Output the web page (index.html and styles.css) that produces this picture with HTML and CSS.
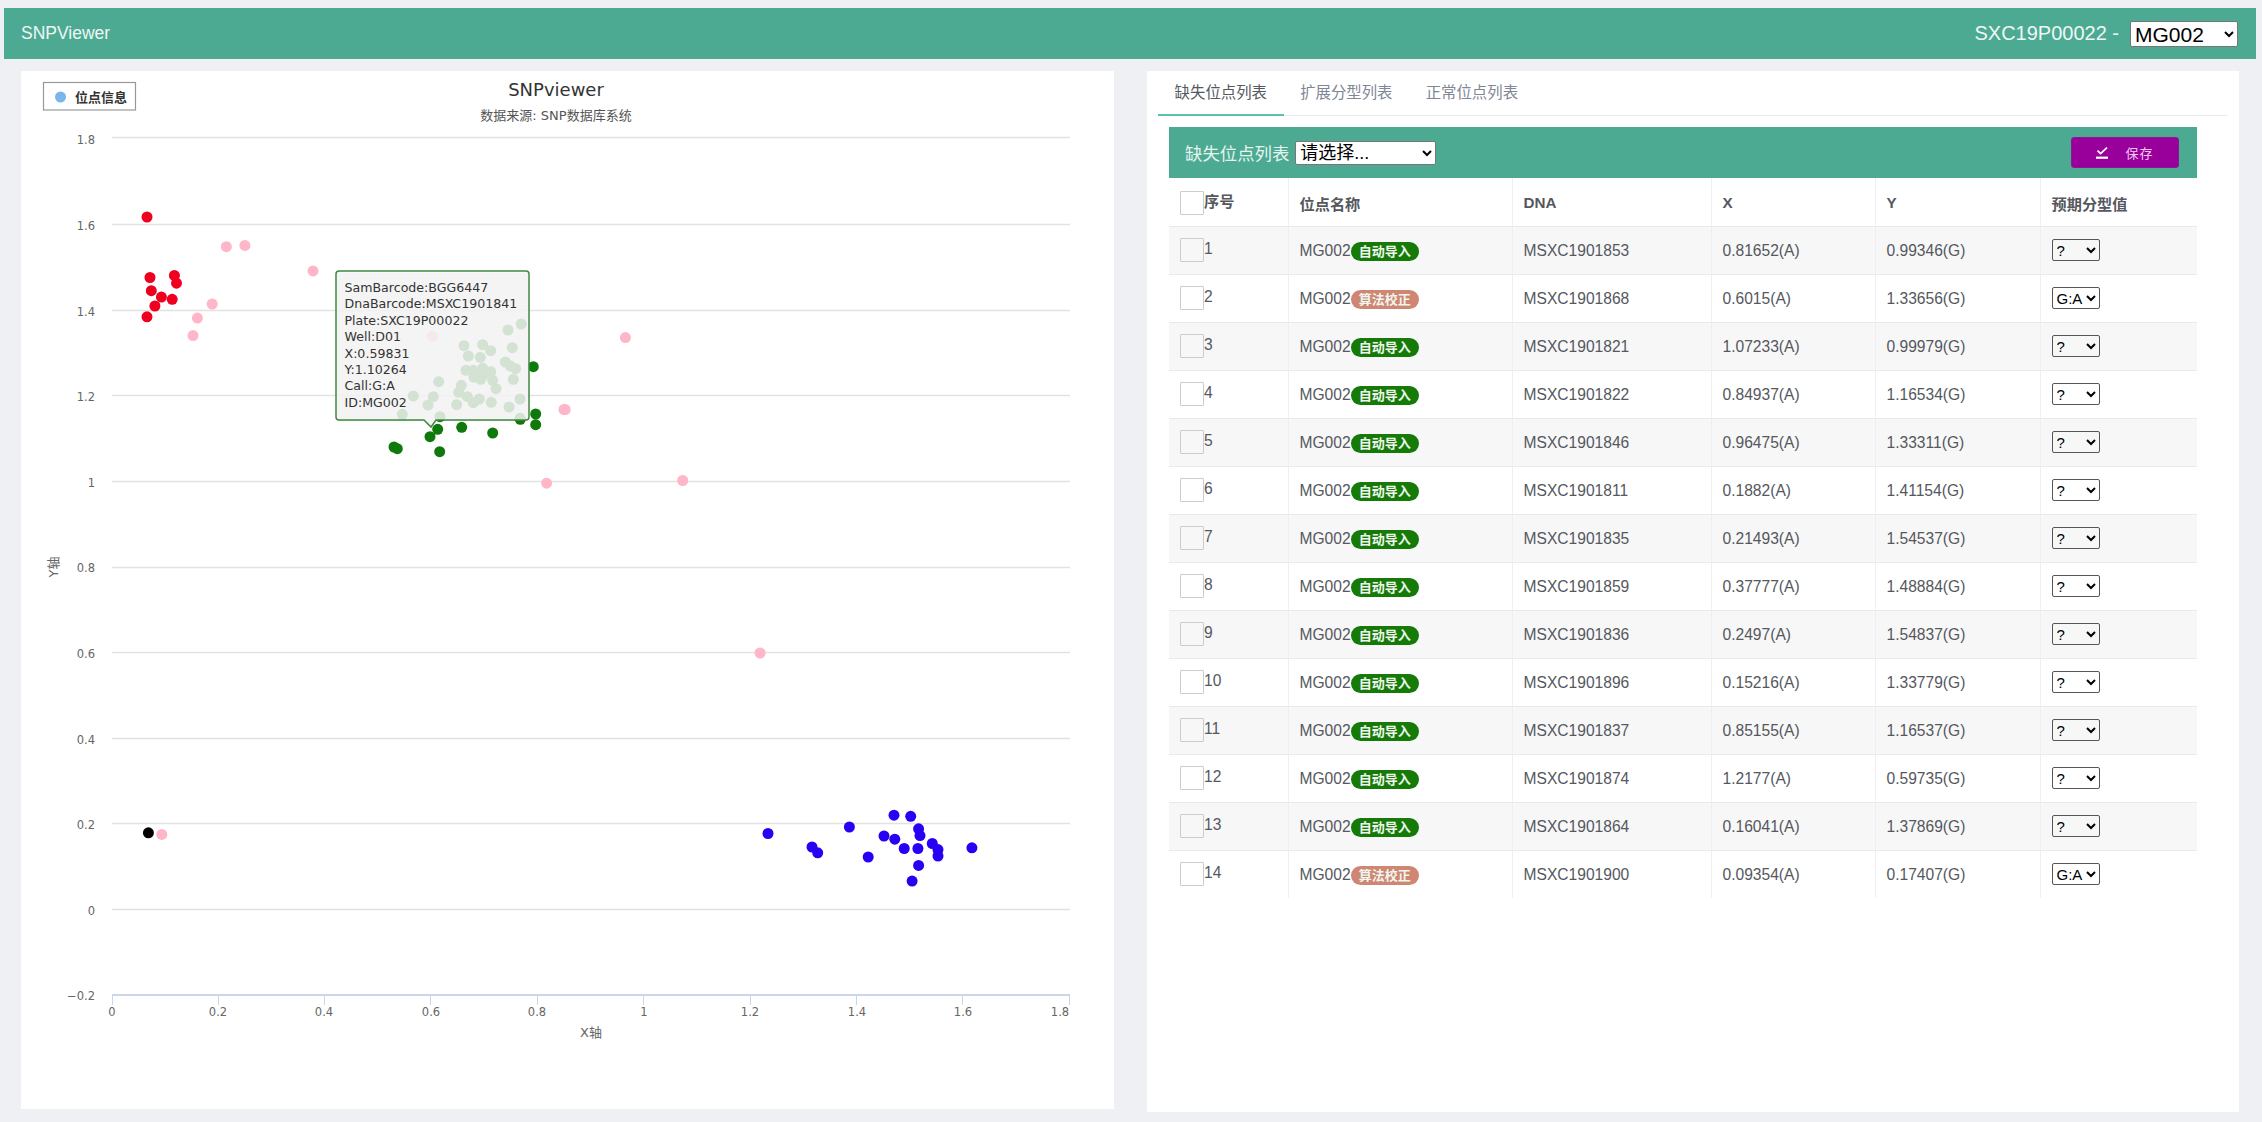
FILE: index.html
```html
<!DOCTYPE html>
<html lang="zh-CN">
<head>
  <meta charset="UTF-8" />
  <title>SNPViewer</title>
  <link rel="stylesheet" href="styles.css">
</head>
<body>
  <div class="topbar">
    <span class="brand">SNPViewer</span>
    <div class="topbar-right">
      <span>SXC19P00022 -</span>
      <select class="site-select"><option>MG002</option></select>
    </div>
  </div>

  <div class="main">
    <div class="panel chart-panel">
      <svg class="chart" viewBox="21 71 1093 1038" width="1093" height="1038">
        <!-- grid -->
        <g class="grid">
          <line x1="112" x2="1070" y1="137.5" y2="137.5"/>
          <line x1="112" x2="1070" y1="224.5" y2="224.5"/>
          <line x1="112" x2="1070" y1="310.5" y2="310.5"/>
          <line x1="112" x2="1070" y1="395.5" y2="395.5"/>
          <line x1="112" x2="1070" y1="481.5" y2="481.5"/>
          <line x1="112" x2="1070" y1="567.5" y2="567.5"/>
          <line x1="112" x2="1070" y1="652.5" y2="652.5"/>
          <line x1="112" x2="1070" y1="738.5" y2="738.5"/>
          <line x1="112" x2="1070" y1="823.5" y2="823.5"/>
          <line x1="112" x2="1070" y1="909.5" y2="909.5"/>
        </g>
        <g class="axis">
          <line x1="112" x2="1070" y1="995" y2="995"/>
          <line x1="112.5" x2="112.5" y1="995" y2="1005"/>
          <line x1="218.5" x2="218.5" y1="995" y2="1005"/>
          <line x1="324.5" x2="324.5" y1="995" y2="1005"/>
          <line x1="430.5" x2="430.5" y1="995" y2="1005"/>
          <line x1="537.5" x2="537.5" y1="995" y2="1005"/>
          <line x1="643.5" x2="643.5" y1="995" y2="1005"/>
          <line x1="750.5" x2="750.5" y1="995" y2="1005"/>
          <line x1="856.5" x2="856.5" y1="995" y2="1005"/>
          <line x1="962.5" x2="962.5" y1="995" y2="1005"/>
          <line x1="1069.5" x2="1069.5" y1="995" y2="1005"/>
        </g>
        <g class="y-labels">
          <text x="95" y="144">1.8</text>
          <text x="95" y="230">1.6</text>
          <text x="95" y="316">1.4</text>
          <text x="95" y="401">1.2</text>
          <text x="95" y="487">1</text>
          <text x="95" y="572">0.8</text>
          <text x="95" y="658">0.6</text>
          <text x="95" y="744">0.4</text>
          <text x="95" y="829">0.2</text>
          <text x="95" y="915">0</text>
          <text x="95" y="1000">−0.2</text>
        </g>
        <g class="x-labels">
          <text x="112" y="1016">0</text>
          <text x="218" y="1016">0.2</text>
          <text x="324" y="1016">0.4</text>
          <text x="431" y="1016">0.6</text>
          <text x="537" y="1016">0.8</text>
          <text x="644" y="1016">1</text>
          <text x="750" y="1016">1.2</text>
          <text x="857" y="1016">1.4</text>
          <text x="963" y="1016">1.6</text>
          <text x="1060" y="1016">1.8</text>
        </g>
        <text class="axis-title" x="591" y="1037">X轴</text>
        <text class="axis-title" transform="translate(58 567) rotate(-90)">Y轴</text>

        <text class="chart-title" x="556" y="96">SNPviewer</text>
        <text class="chart-sub" x="556" y="120">数据来源: SNP数据库系统</text>

        <!-- legend -->
        <rect class="legend-box" x="43.5" y="82.5" width="92" height="27.5"/>
        <circle class="legend-dot" cx="60.5" cy="97" r="5.5"/>
        <text class="legend-text" x="75" y="102">位点信息</text>

        <!-- 缺失点 -->
        <g class="pt pt-pink">
          <circle cx="546.6" cy="483.2"/><circle cx="432.1" cy="336.2"/><circle cx="682.7" cy="480.5"/>
          <circle cx="564" cy="409.5"/><circle cx="625.4" cy="337.6"/><circle cx="212.2" cy="304"/>
          <circle cx="226.4" cy="246.7"/><circle cx="313" cy="270.9"/><circle cx="244.9" cy="245.4"/>
          <circle cx="193" cy="335.6"/><circle cx="565.2" cy="409.5"/><circle cx="760.1" cy="653"/>
          <circle cx="197.4" cy="318.1"/><circle cx="161.8" cy="834.4"/>
        </g>
        <g class="pt pt-red">
          <circle cx="147" cy="217"/><circle cx="150" cy="277.5"/><circle cx="174.4" cy="275.4"/>
          <circle cx="176.5" cy="283.2"/><circle cx="151.3" cy="290.7"/><circle cx="161.4" cy="297.1"/>
          <circle cx="172.2" cy="299.3"/><circle cx="154.9" cy="306"/><circle cx="147" cy="316.8"/>
        </g>
        <g class="pt pt-black">
          <circle cx="148.4" cy="832.8"/>
        </g>
        <g class="pt pt-blue">
          <circle cx="768" cy="833.5"/><circle cx="812" cy="847"/><circle cx="817.7" cy="852.8"/>
          <circle cx="849.4" cy="827"/><circle cx="868.2" cy="857"/><circle cx="884" cy="836"/>
          <circle cx="894" cy="815.2"/><circle cx="894.8" cy="839.2"/><circle cx="904.2" cy="848.5"/>
          <circle cx="910.7" cy="816.3"/><circle cx="912.1" cy="881.1"/><circle cx="917.9" cy="848.5"/>
          <circle cx="918.6" cy="828.8"/><circle cx="920" cy="835.6"/><circle cx="918.6" cy="865.4"/>
          <circle cx="932.3" cy="843.5"/><circle cx="938" cy="849.6"/><circle cx="938" cy="856"/>
          <circle cx="971.9" cy="847.8"/>
        </g>
        <g class="pt pt-green">
          <circle cx="533.3" cy="366.7"/><circle cx="535.7" cy="414"/><circle cx="535.7" cy="424.7"/>
          <circle cx="520.3" cy="419.3"/><circle cx="492.7" cy="433"/><circle cx="461.7" cy="427.3"/>
          <circle cx="437.7" cy="429.3"/><circle cx="430" cy="436.7"/><circle cx="439.7" cy="451.7"/>
          <circle cx="394" cy="447"/><circle cx="397.3" cy="448.7"/><circle cx="440" cy="416.7"/>
          <circle cx="521.3" cy="324"/><circle cx="508" cy="330"/><circle cx="512.3" cy="347.7"/>
          <circle cx="464" cy="345.7"/><circle cx="482.7" cy="344.7"/><circle cx="490.7" cy="350.7"/>
          <circle cx="468.3" cy="356"/><circle cx="480.3" cy="357.3"/><circle cx="505.3" cy="362"/>
          <circle cx="510.3" cy="366"/><circle cx="515.7" cy="368.7"/><circle cx="466" cy="370.3"/>
          <circle cx="473.3" cy="370.3"/><circle cx="482.7" cy="368.3"/><circle cx="490.7" cy="371.7"/>
          <circle cx="483.3" cy="375"/><circle cx="474" cy="377.3"/><circle cx="480.7" cy="379.3"/>
          <circle cx="492.7" cy="380.3"/><circle cx="513.3" cy="379.3"/><circle cx="438.7" cy="381.7"/>
          <circle cx="461.3" cy="385.3"/><circle cx="496" cy="388.7"/><circle cx="458.7" cy="392.3"/>
          <circle cx="467.3" cy="396.7"/><circle cx="433.3" cy="396.7"/><circle cx="413.3" cy="396"/>
          <circle cx="479.3" cy="399"/><circle cx="473.3" cy="402.7"/><circle cx="491.3" cy="402.3"/>
          <circle cx="456.7" cy="404.7"/><circle cx="428" cy="405"/><circle cx="520" cy="399"/>
          <circle cx="509" cy="407"/><circle cx="402.3" cy="414.3"/><circle cx="520" cy="418.3"/>
        </g>

        <!-- tooltip -->
        <path class="tip-shadow" d="M339 273H526a3 3 0 0 1 3 3V418a3 3 0 0 1 -3 3H436L431 428L424 421H339a3 3 0 0 1 -3 -3V276a3 3 0 0 1 3 -3Z"/>
        <path class="tip-box" d="M339 271H526a3 3 0 0 1 3 3V417a3 3 0 0 1 -3 3H436L431 427L424 420H339a3 3 0 0 1 -3 -3V274a3 3 0 0 1 3 -3Z"/>
        <text class="tip-text" x="344.5">
          <tspan x="344.5" y="292">SamBarcode:BGG6447</tspan>
          <tspan x="344.5" y="308.4">DnaBarcode:MSXC1901841</tspan>
          <tspan x="344.5" y="324.8">Plate:SXC19P00022</tspan>
          <tspan x="344.5" y="341.2">Well:D01</tspan>
          <tspan x="344.5" y="357.6">X:0.59831</tspan>
          <tspan x="344.5" y="374">Y:1.10264</tspan>
          <tspan x="344.5" y="390.4">Call:G:A</tspan>
          <tspan x="344.5" y="406.8">ID:MG002</tspan>
        </text>
      </svg>
    </div>

    <div class="panel list-panel">
      <div class="tabs">
        <div class="tab active">缺失位点列表</div>
        <div class="tab">扩展分型列表</div>
        <div class="tab">正常位点列表</div>
      </div>

      <div class="card">
        <div class="card-head">
          <div class="card-title">
            <span>缺失位点列表</span>
            <select class="filter-select"><option>请选择...</option></select>
          </div>
          <button class="save-btn">
            <svg class="save-icon" viewBox="0 0 12 12" width="12" height="12"><path d="M1.5 3.6L4.6 6.6L11 .6" fill="none" stroke="#fff" stroke-width="1.8"/><rect x="0" y="9.6" width="12" height="2.2" fill="#fff"/></svg>
            <span>保存</span>
          </button>
        </div>

        <table class="snp-table">
          <thead>
            <tr>
              <th class="col-no"><input type="checkbox" class="check"><span>序号</span></th>
              <th class="col-name">位点名称</th>
              <th class="col-dna">DNA</th>
              <th class="col-x">X</th>
              <th class="col-y">Y</th>
              <th class="col-call">预期分型值</th>
            </tr>
          </thead>
          <tbody>
            <tr><td><input type="checkbox" class="check"><span>1</span></td><td>MG002<span class="badge auto">自动导入</span></td><td>MSXC1901853</td><td>0.81652(A)</td><td>0.99346(G)</td><td><select class="call-select"><option>?</option><option>G:A</option></select></td></tr>
            <tr><td><input type="checkbox" class="check"><span>2</span></td><td>MG002<span class="badge algo">算法校正</span></td><td>MSXC1901868</td><td>0.6015(A)</td><td>1.33656(G)</td><td><select class="call-select"><option>G:A</option><option>?</option></select></td></tr>
            <tr><td><input type="checkbox" class="check"><span>3</span></td><td>MG002<span class="badge auto">自动导入</span></td><td>MSXC1901821</td><td>1.07233(A)</td><td>0.99979(G)</td><td><select class="call-select"><option>?</option><option>G:A</option></select></td></tr>
            <tr><td><input type="checkbox" class="check"><span>4</span></td><td>MG002<span class="badge auto">自动导入</span></td><td>MSXC1901822</td><td>0.84937(A)</td><td>1.16534(G)</td><td><select class="call-select"><option>?</option><option>G:A</option></select></td></tr>
            <tr><td><input type="checkbox" class="check"><span>5</span></td><td>MG002<span class="badge auto">自动导入</span></td><td>MSXC1901846</td><td>0.96475(A)</td><td>1.33311(G)</td><td><select class="call-select"><option>?</option><option>G:A</option></select></td></tr>
            <tr><td><input type="checkbox" class="check"><span>6</span></td><td>MG002<span class="badge auto">自动导入</span></td><td>MSXC1901811</td><td>0.1882(A)</td><td>1.41154(G)</td><td><select class="call-select"><option>?</option><option>G:A</option></select></td></tr>
            <tr><td><input type="checkbox" class="check"><span>7</span></td><td>MG002<span class="badge auto">自动导入</span></td><td>MSXC1901835</td><td>0.21493(A)</td><td>1.54537(G)</td><td><select class="call-select"><option>?</option><option>G:A</option></select></td></tr>
            <tr><td><input type="checkbox" class="check"><span>8</span></td><td>MG002<span class="badge auto">自动导入</span></td><td>MSXC1901859</td><td>0.37777(A)</td><td>1.48884(G)</td><td><select class="call-select"><option>?</option><option>G:A</option></select></td></tr>
            <tr><td><input type="checkbox" class="check"><span>9</span></td><td>MG002<span class="badge auto">自动导入</span></td><td>MSXC1901836</td><td>0.2497(A)</td><td>1.54837(G)</td><td><select class="call-select"><option>?</option><option>G:A</option></select></td></tr>
            <tr><td><input type="checkbox" class="check"><span>10</span></td><td>MG002<span class="badge auto">自动导入</span></td><td>MSXC1901896</td><td>0.15216(A)</td><td>1.33779(G)</td><td><select class="call-select"><option>?</option><option>G:A</option></select></td></tr>
            <tr><td><input type="checkbox" class="check"><span>11</span></td><td>MG002<span class="badge auto">自动导入</span></td><td>MSXC1901837</td><td>0.85155(A)</td><td>1.16537(G)</td><td><select class="call-select"><option>?</option><option>G:A</option></select></td></tr>
            <tr><td><input type="checkbox" class="check"><span>12</span></td><td>MG002<span class="badge auto">自动导入</span></td><td>MSXC1901874</td><td>1.2177(A)</td><td>0.59735(G)</td><td><select class="call-select"><option>?</option><option>G:A</option></select></td></tr>
            <tr><td><input type="checkbox" class="check"><span>13</span></td><td>MG002<span class="badge auto">自动导入</span></td><td>MSXC1901864</td><td>0.16041(A)</td><td>1.37869(G)</td><td><select class="call-select"><option>?</option><option>G:A</option></select></td></tr>
            <tr><td><input type="checkbox" class="check"><span>14</span></td><td>MG002<span class="badge algo">算法校正</span></td><td>MSXC1901900</td><td>0.09354(A)</td><td>0.17407(G)</td><td><select class="call-select"><option>G:A</option><option>?</option></select></td></tr>
          </tbody>
        </table>
      </div>
    </div>
  </div>
</body>
</html>
```
FILE: styles.css
```css
* {
  box-sizing: border-box;
  margin: 0;
  padding: 0;
}
html, body {
  height: 1122px;
  overflow: hidden;
}
body {
  font-family: "Liberation Sans", "Noto Sans CJK SC", sans-serif;
  background: #eef0f4;
  color: #55585e;
  padding-top: 8px;
}

/* top bar */
.topbar {
  height: 51px;
  margin: 0 6px 0 4px;
  background: #4caa92;
  color: #eef7f4;
  display: flex;
  justify-content: space-between;
  align-items: center;
  padding: 0 18px 0 17px;
}
.brand {
  font-size: 17.5px;
}
.topbar-right {
  display: flex;
  align-items: center;
  gap: 11px;
  font-size: 20px;
}
.site-select {
  width: 108px;
  height: 26px;
  font-family: inherit;
  font-size: 21px;
  background: #fff;
  color: #000;
  border: 1px solid #767676;
  border-radius: 2px;
}

/* layout */
.main {
  display: flex;
  gap: 33px;
  margin: 12px 23px 0 21px;
}
.panel {
  background: #fff;
}
.chart-panel {
  width: 1093px;
  height: 1038px;
}
.list-panel {
  width: 1092px;
  height: 1041px;
  padding: 0 11px;
}

/* chart */
.chart {
  display: block;
  font-family: "DejaVu Sans", "Noto Sans CJK SC", sans-serif;
}
.grid line {
  stroke: #e2e2e4;
  stroke-width: 1.5;
}
.axis line {
  stroke: #ccd6eb;
  stroke-width: 1;
}
.axis line:first-child {
  stroke-width: 2;
}
.y-labels text {
  font-size: 11.5px;
  fill: #666;
  text-anchor: end;
}
.x-labels text {
  font-size: 11.5px;
  fill: #666;
  text-anchor: middle;
}
.axis-title {
  font-size: 13px;
  fill: #666;
  text-anchor: middle;
}
.chart-title {
  font-size: 18px;
  fill: #333;
  text-anchor: middle;
}
.chart-sub {
  font-size: 13px;
  fill: #555;
  text-anchor: middle;
}
.legend-box {
  fill: #fff;
  stroke: #999;
  stroke-width: 1.2;
}
.legend-dot {
  fill: #7cb5ec;
}
.legend-text {
  font-size: 13px;
  font-weight: bold;
  fill: #333;
}
.pt circle {
  r: 5.5px;
}
.pt-pink { fill: #ffb6c8; }
.pt-red { fill: #f0001f; }
.pt-black { fill: #000; }
.pt-blue { fill: #2a00f5; }
.pt-green { fill: #0f7a0b; }
.tip-shadow {
  fill: rgba(0, 0, 0, 0.12);
}
.tip-box {
  fill: rgba(247, 247, 247, 0.85);
  stroke: #3f8a3f;
  stroke-width: 1.5;
}
.tip-text {
  font-size: 12.6px;
  fill: #333;
}

/* tabs */
.tabs {
  display: flex;
  height: 45px;
  border-bottom: 1.5px solid #e8eaec;
}
.tab {
  padding: 0 16.6px;
  font-size: 15.4px;
  line-height: 44px;
  color: #808695;
  height: 45px;
}
.tab.active {
  color: #55585e;
  border-bottom: 2px solid #5cc0ae;
}

/* card */
.card {
  width: 1028px;
  margin: 11px 0 0 11px;
}
.card-head {
  height: 51px;
  background: #4caa92;
  color: #e6f3ef;
  display: flex;
  justify-content: space-between;
  align-items: center;
  padding: 0 18px 0 16px;
}
.card-title {
  display: flex;
  align-items: center;
  gap: 6px;
  font-size: 17.4px;
}
.filter-select {
  width: 141px;
  height: 24px;
  font-family: inherit;
  font-size: 18px;
  background: #fff;
  color: #000;
  border: 1px solid #767676;
  border-radius: 2px;
}
.save-btn {
  width: 108px;
  height: 31px;
  background: #99009b;
  border: 1px solid #8a1a8c;
  border-radius: 3px;
  color: #f3c9f3;
  font-family: inherit;
  font-size: 13px;
  letter-spacing: 1px;
  display: flex;
  align-items: center;
  justify-content: center;
  gap: 17px;
}

/* table */
.snp-table {
  width: 100%;
  table-layout: fixed;
  border-collapse: collapse;
  font-size: 15.6px;
}
.snp-table th, .snp-table td {
  height: 48px;
  padding: 2px 11px 0;
  text-align: left;
  border-left: 1px solid #eeeff1;
  border-bottom: 1.5px solid #e8eaec;
}
.snp-table th {
  font-size: 15.2px;
  font-weight: bold;
}
.snp-table th:first-child, .snp-table td:first-child,
.snp-table td:last-child {
  padding-top: 0;
}
.snp-table th:first-child, .snp-table td:first-child {
  border-left: none;
}
.snp-table tbody tr:nth-child(odd) {
  background: #f7f7f7;
}
.snp-table tbody tr:last-child td {
  border-bottom: none;
}
.col-no { width: 119px; }
.col-name { width: 224px; }
.col-dna { width: 199px; }
.col-x { width: 164px; }
.col-y { width: 165px; }
.col-call { width: 157px; }

.check {
  appearance: none;
  width: 24px;
  height: 24px;
  border: 1px solid #ccc;
  border-radius: 1px;
  vertical-align: middle;
}
.badge {
  display: inline-block;
  height: 19px;
  line-height: 19px;
  width: 68px;
  margin: -4px 0;
  text-align: center;
  border-radius: 10px;
  font-size: 13px;
  font-weight: bold;
  color: #eef6ee;
}
.badge.auto { background: #167a08; }
.badge.algo { background: #cf8672; }
.call-select {
  width: 48px;
  height: 22px;
  font-family: inherit;
  font-size: 15px;
  background: transparent;
  color: #000;
  border: 1px solid #555;
  border-radius: 2px;
}
```
